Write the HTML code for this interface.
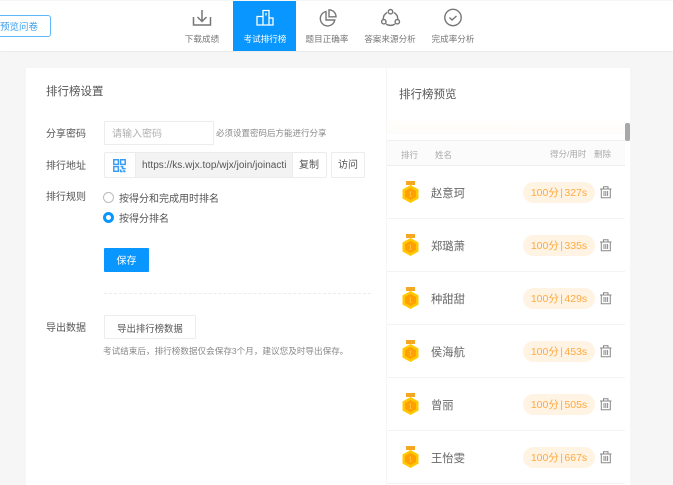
<!DOCTYPE html>
<html lang="zh"><head><meta charset="utf-8">
<style>
html,body{margin:0;padding:0}
body{width:673px;height:485px;overflow:hidden;background:#f6f6f6;position:relative;font-family:"Liberation Sans","Noto Sans CJK SC",sans-serif;color:#555;font-size:10px}
.a{position:absolute;white-space:nowrap;box-sizing:border-box}
.tab{position:absolute;top:33px;width:80px;text-align:center;font-size:8.600px;line-height:12px;color:#777}
.lab{left:46px;font-size:10px;line-height:14px;color:#555}
.name{left:431px;font-size:11.300px;line-height:16px;color:#666}
.pill{left:523px;width:72px;height:21px;border-radius:11px;background:#fff3e3;color:#ffa940;font-size:10.500px;line-height:23px;text-align:center;word-spacing:-1.500px}
.sep{left:387px;width:238px;height:1px;background:#f3f3f3}
svg{position:absolute;overflow:visible}
</style></head><body>
<div class="a" style="left:0;top:1px;width:673px;height:50px;background:#fff;box-shadow:0 1px 1px rgba(0,0,0,.05)"></div>
<div class="a" style="left:-20px;top:15px;width:71px;height:22px;border:1px solid #5cb8fb;border-radius:3px;background:#fff;color:#3a9fee;font-size:9.500px;line-height:23px;text-align:right;padding-right:12px">预览问卷</div>
<div class="a" style="left:233px;top:1px;width:63px;height:50px;background:#0996ff"></div>

<svg style="left:192px;top:9px" width="20" height="18" fill="none" stroke="#777" stroke-width="1.500"><path d="M1.500 8v8h17V8M10 1v11.500M5.500 8l4.500 4.500L14.500 8"/></svg>
<svg style="left:256px;top:9px" width="18" height="18" fill="none" stroke="#fff" stroke-width="1.300"><path d="M1 7.500h6V16H1zM7 1.500h6V16H7zM13 9h4v7h-4zM10 4v2.500"/></svg>
<svg style="left:319px;top:9px" width="18" height="18" fill="none" stroke="#777" stroke-width="1.400"><path d="M7 2.500A7.300 7.300 0 1 0 15.800 11H7zM10 .8a7 7 0 0 1 7 7h-7z"/></svg>
<svg style="left:381px;top:9px" width="19" height="18" fill="none" stroke="#777" stroke-width="1.400"><circle cx="9.500" cy="2.700" r="2.200"/><circle cx="2.800" cy="12.700" r="2.200"/><circle cx="16.300" cy="12.700" r="2.200"/><path d="M6.200 3.500a7.500 7.500 0 0 0-4 6.500M12.800 3.500a7.500 7.500 0 0 1 4 6.500M5 15a8 8 0 0 0 9 0"/></svg>
<svg style="left:444px;top:9px" width="18" height="18" fill="none" stroke="#777" stroke-width="1.400"><circle cx="9" cy="8.500" r="8.200"/><path d="M5.500 8.500l2.500 2.500 4.500-4"/></svg>

<div class="tab" style="left:162px">下载成绩</div>
<div class="tab" style="left:225px;color:#fff">考试排行榜</div>
<div class="tab" style="left:287px">题目正确率</div>
<div class="tab" style="left:350px">答案来源分析</div>
<div class="tab" style="left:413px">完成率分析</div>

<div class="a" style="left:26px;top:68px;width:360px;height:417px;background:#fff"></div>
<div class="a" style="left:387px;top:68px;width:243px;height:417px;background:#fff"></div>

<div class="a" style="left:46px;top:84px;font-size:11.500px;line-height:17px;color:#555">排行榜设置</div>

<div class="a lab" style="top:128px">分享密码</div>
<div class="a" style="left:104px;top:121px;width:110px;height:24px;border:1px solid #ececec;color:#b0b0b0;font-size:10px;line-height:25px;padding-left:7px">请输入密码</div>
<div class="a" style="left:216px;top:127px;font-size:8.500px;line-height:13px;color:#888">必须设置密码后方能进行分享</div>

<div class="a lab" style="top:160px">排行地址</div>
<div class="a" style="left:104px;top:152px;width:223px;height:26px;border:1px solid #ececec;border-radius:2px;background:#fff"></div>
<div class="a" style="left:135px;top:153px;width:158px;height:24px;background:#f3f3f3;border-left:1px solid #ececec;border-right:1px solid #ececec;color:#555;font-size:10px;line-height:25px;padding-left:6px;overflow:hidden;letter-spacing:.03px">https://ks.wjx.top/wjx/join/joinacti</div>
<svg style="left:113px;top:159px" width="13" height="13" fill="none" stroke="#3b9cf5" stroke-width="1.500"><path d="M.800.800h4.600v4.600H.800zM7.600.800h4.600v4.600H7.600zM.800 7.600h4.600v4.600H.800z"/><path d="M7.600 7.600h2v2h3M7.600 10.500v2h2M11 11v1.500h1.500" /></svg>
<div class="a" style="left:293px;top:153px;width:32px;text-align:center;font-size:10px;line-height:26px;color:#555">复制</div>
<div class="a" style="left:331px;top:152px;width:34px;height:26px;border:1px solid #ececec;border-radius:2px;text-align:center;font-size:10px;line-height:26px;color:#555">访问</div>

<div class="a lab" style="top:191px">排行规则</div>
<div class="a" style="left:103px;top:192px;width:11px;height:11px;border:1px solid #bbb;border-radius:50%"></div>
<div class="a" style="left:119px;top:193px;font-size:10px;line-height:14px;color:#555">按得分和完成用时排名</div>
<div class="a" style="left:103px;top:212px;width:11px;height:11px;border:3.500px solid #0996ff;border-radius:50%;background:#fff"></div>
<div class="a" style="left:119px;top:213px;font-size:10px;line-height:14px;color:#555">按得分排名</div>

<div class="a" style="left:104px;top:248px;width:45px;height:24px;background:#0996ff;border-radius:1px;color:#fff;font-size:10px;line-height:27px;text-align:center">保存</div>
<div class="a" style="left:104px;top:293px;width:267px;border-top:1px dashed #ececec"></div>

<div class="a lab" style="top:322px">导出数据</div>
<div class="a" style="left:104px;top:315px;width:92px;height:24px;border:1px solid #ececec;border-radius:1px;text-align:center;font-size:9.400px;line-height:25px;color:#555">导出排行榜数据</div>
<div class="a" style="left:103px;top:345px;font-size:8.600px;line-height:13px;color:#888">考试结束后，排行榜数据仅会保存3个月，建议您及时导出保存。</div>

<div class="a" style="left:399px;top:86px;font-size:11.500px;line-height:18px;color:#555">排行榜预览</div>
<div class="a" style="left:387px;top:120px;width:238px;height:14px;background:linear-gradient(#fffefc,#fefdfa 70%,#fcfcfc)"></div>
<div class="a" style="left:625px;top:123px;width:5px;height:18px;background:#a8a8a8;border-radius:2px"></div>
<div class="a" style="left:387px;top:140px;width:238px;height:26px;background:#fbfbfb;border-top:1px solid #f0f0f0;border-bottom:1px solid #eee"></div>
<div class="a" style="left:401px;top:149px;font-size:8.500px;line-height:13px;color:#aaa">排行</div>
<div class="a" style="left:435px;top:149px;font-size:8.500px;line-height:13px;color:#aaa">姓名</div>
<div class="a" style="left:550px;top:148px;font-size:8.500px;line-height:13px;color:#aaa">得分/用时</div>
<div class="a" style="left:594px;top:148px;font-size:8.500px;line-height:13px;color:#aaa">删除</div>

<div class="a sep" style="top:218px"></div>
<div class="a sep" style="top:271px"></div>
<div class="a sep" style="top:324px"></div>
<div class="a sep" style="top:377px"></div>
<div class="a sep" style="top:430px"></div>
<div class="a sep" style="top:483px"></div>

<svg width="0" height="0" style="left:0;top:0"><defs>
<g id="m"><path d="M4 0h9v4H4z" fill="#f5a623"/><path d="M8.500 4l8 4.500v9l-8 4.500-8-4.500v-9z" fill="#ffc800"/><path d="M8.500 7l5.500 3v6l-5.500 3-5.500-3v-6z" fill="#ff9f00"/><text x="8.500" y="15.500" text-anchor="middle" font-size="7" fill="#ffcf4d" font-family="Liberation Sans, sans-serif">1</text></g>
<g id="t" fill="none" stroke="#888" stroke-width="1"><path d="M0 3h11.500M3.500 3V.7h4.500V3M1.300 3v8.800h9V3M4 5v5M5.800 5v5M7.600 5v5"/></g>
</defs></svg>

<svg style="left:402px;top:181px" width="17" height="22"><use href="#m"/></svg>
<svg style="left:402px;top:234px" width="17" height="22"><use href="#m"/></svg>
<svg style="left:402px;top:287px" width="17" height="22"><use href="#m"/></svg>
<svg style="left:402px;top:340px" width="17" height="22"><use href="#m"/></svg>
<svg style="left:402px;top:393px" width="17" height="22"><use href="#m"/></svg>
<svg style="left:402px;top:446px" width="17" height="22"><use href="#m"/></svg>

<div class="a name" style="top:186px">赵意珂</div><div class="a pill" style="top:182px">100分 | 327s</div>
<div class="a name" style="top:239px">郑璐萧</div><div class="a pill" style="top:235px">100分 | 335s</div>
<div class="a name" style="top:292px">种甜甜</div><div class="a pill" style="top:288px">100分 | 429s</div>
<div class="a name" style="top:345px">侯海航</div><div class="a pill" style="top:341px">100分 | 453s</div>
<div class="a name" style="top:398px">曾丽</div><div class="a pill" style="top:394px">100分 | 505s</div>
<div class="a name" style="top:451px">王怡雯</div><div class="a pill" style="top:447px">100分 | 667s</div>

<svg style="left:600px;top:186px" width="12" height="12"><use href="#t"/></svg>
<svg style="left:600px;top:239px" width="12" height="12"><use href="#t"/></svg>
<svg style="left:600px;top:292px" width="12" height="12"><use href="#t"/></svg>
<svg style="left:600px;top:345px" width="12" height="12"><use href="#t"/></svg>
<svg style="left:600px;top:398px" width="12" height="12"><use href="#t"/></svg>
<svg style="left:600px;top:451px" width="12" height="12"><use href="#t"/></svg>
</body></html>
